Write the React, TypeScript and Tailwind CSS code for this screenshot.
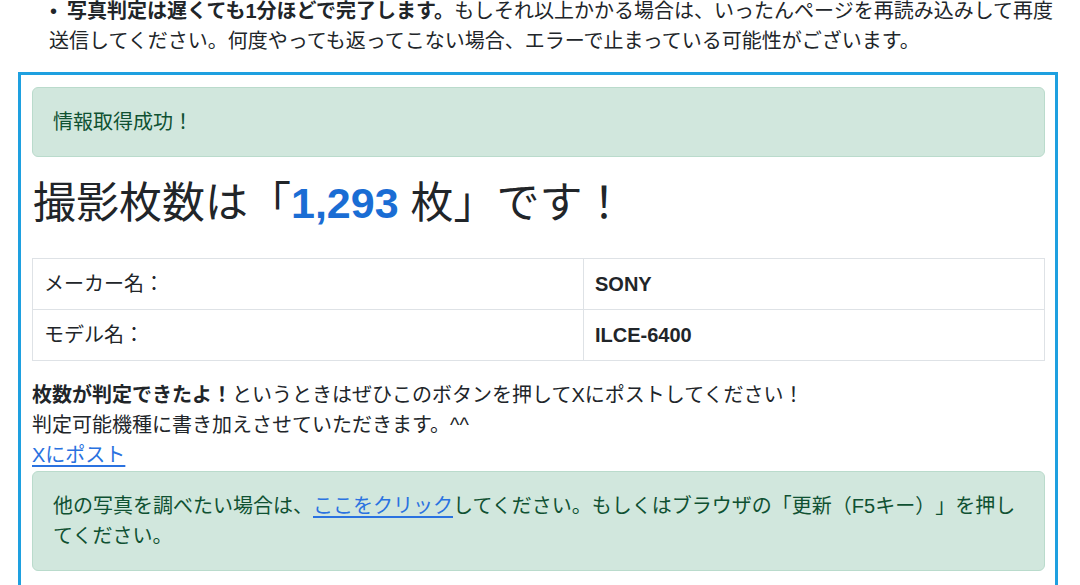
import React from 'react'

const font = 'font-["Liberation_Sans","Noto_Sans_CJK_JP",sans-serif]'

const App: React.FC = () => {
  const rows = [
    { label: 'メーカー名：', value: 'SONY' },
    { label: 'モデル名：', value: 'ILCE-6400' },
  ]

  return (
    <div className={`${font} h-[585px] w-[1080px] overflow-hidden bg-white text-[20px] leading-[30px] text-[#212529] [text-spacing-trim:space-all]`}>
      {/* Notice text */}
      <div className="-mt-[4px] pl-[49px] pr-[20px]">
        <p>
          <span className="inline-block w-[18px] pl-[1px]">•</span>
          <b>写真判定は遅くても1分ほどで完了します。</b>
          もしそれ以上かかる場合は、いったんページを再読み込みして再度送信してください。何度やっても返ってこない場合、エラーで止まっている可能性がございます。
        </p>
      </div>

      {/* Result box */}
      <div className="mt-[16px] ml-[18px] w-[1040px] border-[3px] border-[#1ea0e0] pt-[12px] pl-[11px] pr-[10px] pb-[20px]">
        <div className="rounded-[6px] border border-[#badbcc] bg-[#d1e7dd] px-[20px] py-[19px] text-[#0f5132]">
          情報取得成功！
        </div>

        <h1 className="mt-[20px] mb-[29px] pl-[1px] text-[43px] leading-[52px] font-normal text-[#212529]">
          撮影枚数は「<span className="font-bold text-[#1a6dd4]">1,293</span> 枚」です！
        </h1>

        <table className="w-full border-collapse border border-[#dee2e6]">
          <tbody>
            {rows.map((row) => (
              <tr key={row.label} className="h-[50px]">
                <td className="w-[551px] border border-[#dee2e6] px-[11px] py-[10px]">{row.label}</td>
                <td className="border border-[#dee2e6] px-[11px] py-[10px] font-bold">{row.value}</td>
              </tr>
            ))}
          </tbody>
        </table>

        <div className="mt-[19px]">
          <p>
            <b>枚数が判定できたよ！</b>というときはぜひこのボタンを押してXにポストしてください！
            <br />
            判定可能機種に書き加えさせていただきます。^^
          </p>
          <a href="#" className="text-[#2a72e0] underline underline-offset-[3px]">
            Xにポスト
          </a>
        </div>

        <div className="mt-[1px] rounded-[6px] border border-[#badbcc] bg-[#d1e7dd] px-[20px] py-[19px] text-[#0f5132]">
          他の写真を調べたい場合は、
          <a href="#" className="text-[#2a72e0] underline underline-offset-[3px]">
            ここをクリック
          </a>
          してください。もしくはブラウザの「更新（F5キー）」を押してください。
        </div>
      </div>
    </div>
  )
}

export default App
